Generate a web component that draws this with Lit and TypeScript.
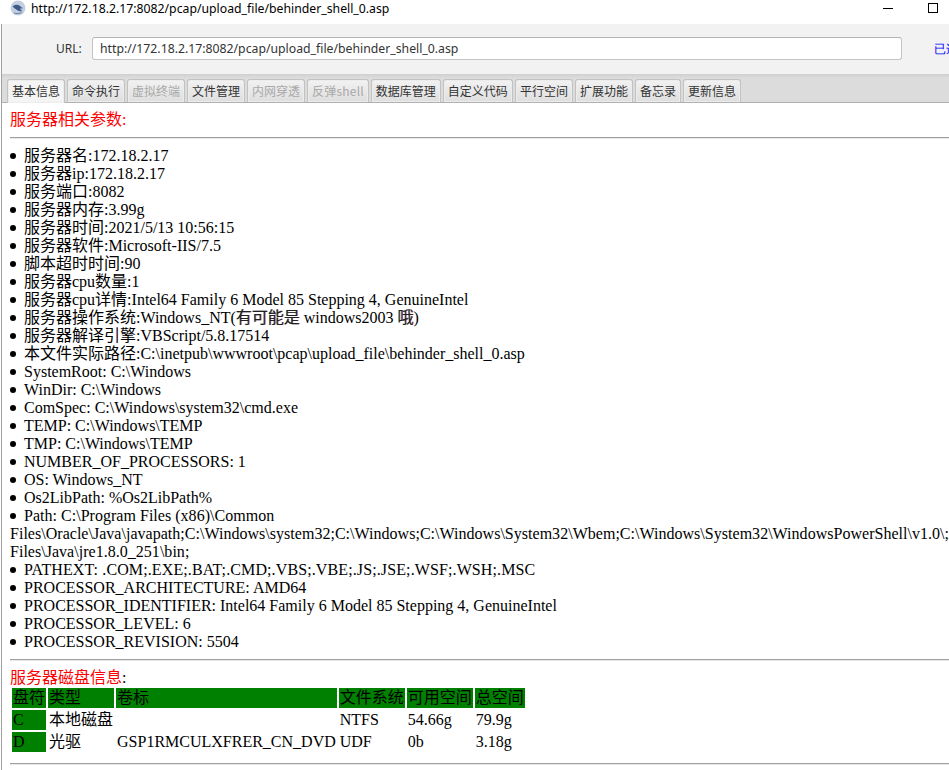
import { LitElement, html, css } from "lit";
import { customElement } from "lit/decorators.js";

const tabs: [string, boolean?][] = [
  ["基本信息"], ["命令执行"], ["虚拟终端", true], ["文件管理"], ["内网穿透", true], ["反弹shell", true],
  ["数据库管理"], ["自定义代码"], ["平行空间"], ["扩展功能"], ["备忘录"], ["更新信息"],
];

const simple = [
  "服务器名:172.18.2.17", "服务器ip:172.18.2.17", "服务端口:8082", "服务器内存:3.99g",
  "服务器时间:2021/5/13 10:56:15", "服务器软件:Microsoft-IIS/7.5", "脚本超时时间:90", "服务器cpu数量:1",
  "服务器cpu详情:Intel64 Family 6 Model 85 Stepping 4, GenuineIntel",
];
const after = [
  "服务器解译引擎:VBScript/5.8.17514",
  "本文件实际路径:C:\\inetpub\\wwwroot\\pcap\\upload_file\\behinder_shell_0.asp",
  "SystemRoot: C:\\Windows", "WinDir: C:\\Windows", "ComSpec: C:\\Windows\\system32\\cmd.exe",
  "TEMP: C:\\Windows\\TEMP", "TMP: C:\\Windows\\TEMP", "NUMBER_OF_PROCESSORS: 1", "OS: Windows_NT",
  "Os2LibPath: %Os2LibPath%",
];
const rest = [
  "PROCESSOR_ARCHITECTURE: AMD64",
  "PROCESSOR_IDENTIFIER: Intel64 Family 6 Model 85 Stepping 4, GenuineIntel",
  "PROCESSOR_LEVEL: 6", "PROCESSOR_REVISION: 5504",
];

@customElement("app-root")
export class AppRoot extends LitElement {
  static styles = css`
    :host { display: block; width: 949px; height: 770px; overflow: hidden; background: #fff; font-family: "Liberation Serif", "Noto Sans CJK SC", serif; font-size: 16px; color: #000; }
    .titlebar { height: 24px; box-sizing: border-box; display: flex; align-items: center; font: 12.25px "Noto Sans", "Open Sans", sans-serif; color: #000; padding: 0 0 8px 10px; gap: 5px; background: #fff; }
    .titlebar .t { flex: 1; white-space: nowrap; }
    .winbtns { display: flex; align-items: center; gap: 35px; padding-right: 11px; }
    .min { width: 10px; height: 1px; background: #000; }
    .max { width: 8px; height: 8px; border: 1px solid #000; }
    .win { margin-left: 1px; border-left: 1px solid #a0a0a0; height: 746px; overflow: hidden; display: flex; flex-direction: column; }
    .toolbar { height: 50px; flex: none; background: #f2f2f2; display: flex; align-items: center; font: 12px "Noto Sans", sans-serif; color: #333; box-sizing: border-box; padding: 0 0 1px 54px; }
    .toolbar label { width: 36px; flex: none; }
    .url { width: 810px; height: 23px; flex: none; box-sizing: border-box; border: 1px solid #c4c4c4; border-top-color: #b4b4b4; border-radius: 3px; background: #fff; padding-left: 7px; display: flex; align-items: center; color: #333; font-size: 12.25px; white-space: nowrap; }
    .link { margin-left: 32px; color: #00f; white-space: nowrap; }
    .tabs { height: 29px; flex: none; box-sizing: border-box; background: linear-gradient(#cfcfcf, #dcdcdc 4px); border-bottom: 1px solid #b0b0b0; display: flex; align-items: flex-end; gap: 2px; padding-left: 5px; font: 12px "Noto Sans CJK SC", "Noto Sans", sans-serif; }
    .tab { height: 23px; box-sizing: border-box; padding: 0 4px 2px; border: 1px solid #c2c2c2; border-bottom: none; border-radius: 3px 3px 0 0; background: linear-gradient(#f2f2f2, #dedede); color: #333; display: flex; align-items: center; white-space: nowrap; box-shadow: inset 0 0 0 1px #ececec; }
    .tab.on { background: #f4f4f4; height: 24px; margin-bottom: -1px; padding-bottom: 3px; }
    .tab.off { color: #a8a8a8; }
    .tab.wide { letter-spacing: 0.2px; }
    .content { flex: 1; padding: 7px 0 0 8px; background: #fff; overflow: hidden; line-height: 18px; min-width: 0; }
    .h { color: #f00; line-height: 20px; }
    hr { margin: 7px 0 0 0; border: 0; border-top: 1px solid #a0a0a0; border-bottom: 1px solid #e8e8e8; height: 0; width: 960px; }
    ul { list-style: none; margin: 8px 0 0; padding: 0; width: 939px; }
    li::before { content: ""; display: inline-block; width: 6px; height: 6px; border-radius: 50%; background: #000; margin: 0 8px 2px 0; vertical-align: middle; }
    li.sp { letter-spacing: 0.11px; }
    li.path { letter-spacing: 0.025px; }
    .mid { margin-top: 8px; }
    .fr { color: #222; text-shadow: -0.6px 0 rgba(0, 220, 255, 0.5), 0.6px 0 rgba(255, 0, 0, 0.5); }
    .h2 { margin-top: 8px; line-height: 18px; }
    .h2 i { font-style: normal; color: #000; }
    table { border-spacing: 2px; margin: -1px 0 0 0; border-collapse: separate; line-height: 18px; }
    td { padding: 1px; white-space: nowrap; }
    tr.head td, td.g { background: #008000; }
    .last { margin-top: 9px; }
  `;

  render() {
    return html`
      <div class="titlebar">
        <svg width="16" height="16" viewBox="0 0 16 16"><circle cx="8" cy="8" r="7.5" fill="#c3cfe0"/><path d="M2.5 6.5c2-2 5-2.500 7-1 1 .8 1.500 2 3.500 2.500-1 .6-2 .6-3 .3.5 1.500 1.500 2.200 2.500 2.700-2 .6-4 .3-5.500-1C5.500 9 4 8 2.500 6.500z" fill="#3f5a88"/><path d="M4 13c2 .8 5 .8 7.500-.5" stroke="#5d76a0" fill="none"/></svg>
        <span class="t">http://172.18.2.17:8082/pcap/upload_file/behinder_shell_0.asp</span>
        <div class="winbtns"><div class="min"></div><div class="max"></div></div>
      </div>
      <div class="win">
        <div class="toolbar">
          <label>URL:</label>
          <div class="url">http://172.18.2.17:8082/pcap/upload_file/behinder_shell_0.asp</div>
          <span class="link">已连接</span>
        </div>
        <div class="tabs">
          ${tabs.map(([t, off], i) => html`<div class="tab ${i === 0 ? "on" : ""} ${off ? "off" : ""} ${t.includes("shell") ? "wide" : ""}">${t}</div>`)}
        </div>
        <div class="content">
          <div class="h">服务器相关参数:</div>
          <hr />
          <ul>
            ${simple.map((s) => html`<li>${s}</li>`)}
            <li>服务器操作系统:Windows_NT(<span class="fr">有可能是</span> windows2003 <span class="fr">哦</span>)</li>
            ${after.map((s) => html`<li>${s}</li>`)}
            <li class="path">Path: C:\\Program Files (x86)\\Common Files\\Oracle\\Java\\javapath;C:\\Windows\\system32;C:\\Windows;C:\\Windows\\System32\\Wbem;C:\\Windows\\System32\\WindowsPowerShell\\v1.0\\;C:\\Program Files\\Java\\jre1.8.0_251\\bin;</li>
            <li class="sp">PATHEXT: .COM;.EXE;.BAT;.CMD;.VBS;.VBE;.JS;.JSE;.WSF;.WSH;.MSC</li>
            ${rest.map((s) => html`<li>${s}</li>`)}
          </ul>
          <hr class="mid" />
          <div class="h h2">服务器磁盘信息<i>:</i></div>
          <table>
            <tr class="head"><td>盘符</td><td>类型</td><td>卷标</td><td>文件系统</td><td>可用空间</td><td>总空间</td></tr>
            <tr><td class="g">C</td><td>本地磁盘</td><td></td><td>NTFS</td><td>54.66g</td><td>79.9g</td></tr>
            <tr><td class="g">D</td><td>光驱</td><td>GSP1RMCULXFRER_CN_DVD</td><td>UDF</td><td>0b</td><td>3.18g</td></tr>
          </table>
          <hr class="last" />
        </div>
      </div>
    `;
  }
}
